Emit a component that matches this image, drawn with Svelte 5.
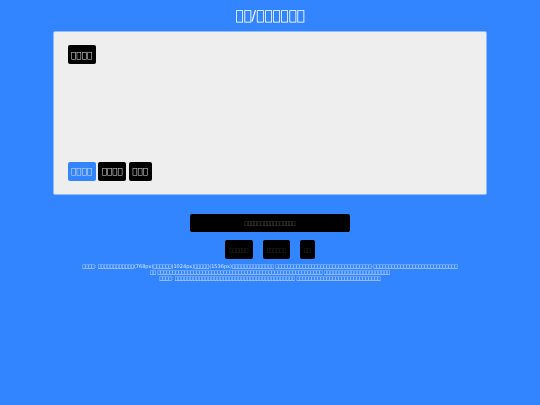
<script>
	const box = (n) => '\uE000'.repeat(n);
	const title = `${box(2)}/${box(6)}`;
	const tabs = [
		{ label: box(4), active: true },
		{ label: box(4), active: false },
		{ label: box(3), active: false }
	];
	const actions = [box(6), box(6), box(2)];
	const notes = [
		`${box(4)}: ${box(12)}(768px)${box(6)}(1024px)${box(5)}(1536px)${box(14)} ${box(32)}-${box(28)}`,
		`${box(2)} ${box(55)} ${box(22)}`,
		`${box(4)}: ${box(40)} ${box(28)}`
	];
</script>

<div class="page">
	<h1>{title}</h1>

	<section class="card">
		<button class="btn">{box(4)}</button>
		<div class="tabs">
			{#each tabs as tab}
				<button class="btn" class:active={tab.active}>{tab.label}</button>
			{/each}
		</div>
	</section>

	<button class="submit">{box(16)}</button>

	<div class="actions">
		{#each actions as action}
			<button class="action">{action}</button>
		{/each}
	</div>

	<div class="notes">
		{#each notes as note}
			<p>{note}</p>
		{/each}
	</div>
</div>

<style>
	:global(body) {
		background: #3385ff;
		font-family: 'DejaVu Sans', sans-serif;
	}

	/* the reference is soft, it looks scaled down from a larger capture */
	.page {
		display: flex;
		flex-direction: column;
		align-items: center;
		height: 405px;
		filter: blur(0.25px);
	}

	h1 {
		margin: 6px 0 7px;
		font-size: 13.5px;
		line-height: 18px;
		font-weight: 400;
		color: #fff;
	}

	.card {
		box-sizing: border-box;
		width: 434px;
		height: 164px;
		padding: 13px 13.5px 13.5px;
		display: flex;
		flex-direction: column;
		justify-content: space-between;
		align-items: flex-start;
		background: #eee;
		border: 1px solid #8fbcff;
		border-radius: 2px;
	}

	.tabs {
		display: flex;
		gap: 2.3px;
	}

	button {
		font-family: inherit;
		border: 0;
		margin: 0;
		background: #000;
		border-radius: 2px;
	}

	.btn {
		height: 19px;
		padding: 0 3.6px;
		font-size: 8.8px;
		color: #ddd;
	}

	.btn.active {
		background: #3385ff;
	}

	.submit {
		width: 160px;
		height: 18px;
		margin-top: 19px;
		font-size: 5.3px;
		color: #666;
	}

	.actions {
		display: flex;
		gap: 10px;
		margin-top: 8px;
	}

	.action {
		height: 19px;
		padding: 0 4.2px;
		font-size: 5.3px;
		color: #333;
	}

	.notes {
		margin-top: 4px;
		font-size: 5px;
		line-height: 6px;
		text-align: center;
		color: #d5e5ff;
	}

	p {
		margin: 0;
	}
</style>
